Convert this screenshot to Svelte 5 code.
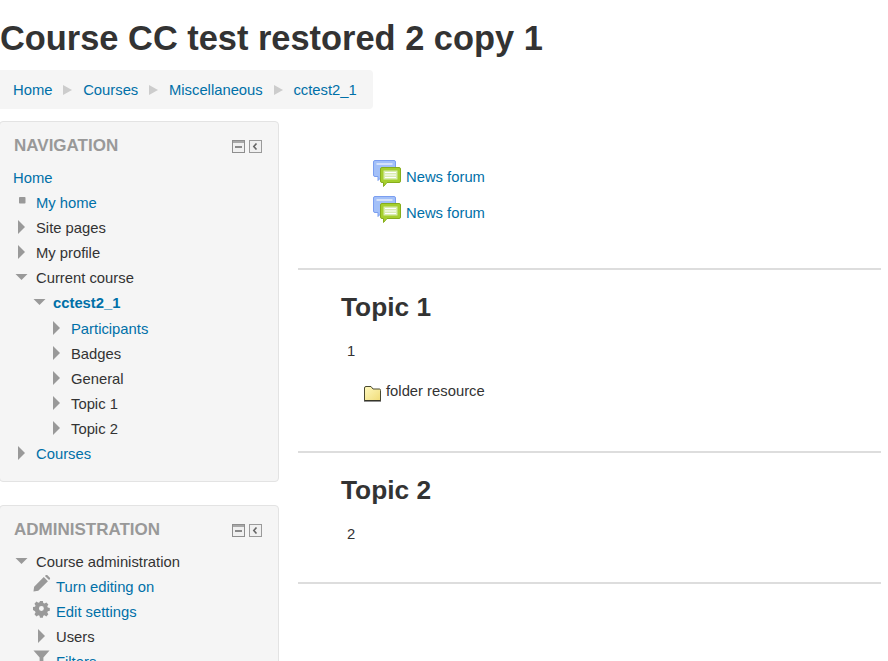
<script>
  const crumbs = ['Home', 'Courses', 'Miscellaneous', 'cctest2_1'];
  const nav = [
    { t: 'My home', link: true, icon: 'sq', lv: 'a' },
    { t: 'Site pages', icon: 'r', lv: 'a' },
    { t: 'My profile', icon: 'r', lv: 'a' },
    { t: 'Current course', icon: 'd', lv: 'a' },
    { t: 'cctest2_1', link: true, bold: true, icon: 'd', lv: 'b' },
    { t: 'Participants', link: true, icon: 'r', lv: 'c', first: true },
    { t: 'Badges', icon: 'r', lv: 'c' },
    { t: 'General', icon: 'r', lv: 'c' },
    { t: 'Topic 1', icon: 'r', lv: 'c' },
    { t: 'Topic 2', icon: 'r', lv: 'c' },
    { t: 'Courses', link: true, icon: 'r', lv: 'a' }
  ];
  const admin = [
    { t: 'Course administration', icon: 'd', lv: 'a' },
    { t: 'Turn editing on', link: true, icon: 'pencil', lv: 'e' },
    { t: 'Edit settings', link: true, icon: 'gear', lv: 'e' },
    { t: 'Users', icon: 'r', lv: 'e' },
    { t: 'Filters', link: true, icon: 'filter', lv: 'e' }
  ];
</script>

{#snippet icon(kind)}
  <span class="ic">
    {#if kind === 'r'}
      <svg class="tri" width="15" height="14" viewBox="0 0 15 14"><path d="M4 0 L11 7 L4 14Z" fill="#999"/></svg>
    {:else if kind === 'd'}
      <svg width="15" height="14" viewBox="0 0 15 14"><path d="M1.500 4 H13.500 L7.500 10Z" fill="#999"/></svg>
    {:else if kind === 'sq'}
      <svg width="15" height="14" viewBox="0 0 15 14"><rect x="5" y="2" width="6.500" height="6.500" rx="0.800" fill="#999"/></svg>
    {:else if kind === 'pencil'}
      <svg class="pencil" width="17" height="17" viewBox="0 0 18 18"><path d="M0.500 17.500 L1.200 12.400 L11.400 2.200 L15.800 6.600 L5.600 16.800Z M12.600 1 L13.800 0 Q14.400 -0.300 15 0.100 L17.900 3 Q18.300 3.600 18 4.200 L17 5.400Z" fill="#999"/></svg>
    {:else if kind === 'gear'}
      <svg class="gear" width="17" height="17" viewBox="0 0 18 18"><path fill="#999" fill-rule="evenodd" d="M7.300 0h3.400l.5 2.400 1.500.6 2.100-1.300 2.400 2.400-1.300 2.100.6 1.500 2.400.5v3.400l-2.400.5-.6 1.500 1.300 2.100-2.400 2.400-2.100-1.300-1.500.6-.5 2.400H7.300l-.5-2.400-1.500-.6-2.100 1.300-2.400-2.400 1.300-2.100-.6-1.500L-.9 10.600V7.200l2.400-.5.6-1.500L.8 3.100l2.400-2.400 2.100 1.300 1.500-.6z M9 6a2.900 2.900 0 1 0 0 5.800a2.900 2.900 0 1 0 0-5.800z" transform="translate(0.800 0) scale(0.900 0.900)"/></svg>
    {:else if kind === 'filter'}
      <svg class="filter" width="17" height="16" viewBox="0 0 18 16"><path d="M0.500 0 H17.500 L11 7.500 V16 L7 13 V7.500Z" fill="#999"/></svg>
    {/if}
  </span>
{/snippet}

{#snippet rows(list)}
  {#each list as r}
    <div class="row {r.lv}" class:first={r.first}>
      {@render icon(r.icon)}
      {#if r.link}
        <a href="#top" class:bold={r.bold}>{r.t}</a>
      {:else}
        <span>{r.t}</span>
      {/if}
    </div>
  {/each}
{/snippet}

{#snippet controls()}
  <div class="controls">
    <svg width="13" height="13" viewBox="0 0 13 13"><rect x="0.500" y="0.500" width="12" height="12" fill="#f0f0f0" stroke="#8e8e8e"/><rect x="1" y="1" width="11" height="2" fill="#a8a8a8"/><rect x="3" y="6" width="7" height="2" fill="#8a8a8a"/></svg>
    <svg width="13" height="13" viewBox="0 0 13 13"><rect x="0.500" y="0.500" width="12" height="12" fill="#f0f0f0" stroke="#9a9a9a"/><path d="M7.500 3.500 L4.800 6.500 L7.500 9.500" fill="none" stroke="#666" stroke-width="1.600"/></svg>
  </div>
{/snippet}

{#snippet forum()}
  <svg class="forum" width="28" height="28" viewBox="0 0 28 28">
    <path d="M2 0.500 H21 Q22.500 0.500 22.500 2 V15 Q22.500 16.500 21 16.500 H9 L5 20.500 V16.500 H2 Q0.500 16.500 0.500 15 V2 Q0.500 0.500 2 0.500Z" fill="#a3c0f8" stroke="#7b9ef0"/>
    <rect x="3.500" y="3" width="16" height="2" fill="#d5e2fa"/>
    <path d="M9 7.500 H26 Q27.500 7.500 27.500 9 V21 Q27.500 22.500 26 22.500 H14 L10.500 26.500 V22.500 H9 Q7.500 22.500 7.500 21 V9 Q7.500 7.500 9 7.500Z" fill="#a5cf2e" stroke="#86ad1c"/>
    <rect x="10.500" y="10.500" width="14" height="9" fill="#d9ecb0"/>
    <path d="M12 12.500 H23 M12 15 H23 M12 17.500 H23" stroke="#fff" stroke-width="1"/>
  </svg>
{/snippet}

<div class="page" id="top">
  <h1>Course CC test restored 2 copy 1</h1>
  <nav class="crumbs">
    {#each crumbs as c, i}
      {#if i > 0}
        <span class="sep"><svg width="9" height="10" viewBox="0 0 9 10"><path d="M0 0 L9 5 L0 10Z" fill="#ccc"/></svg></span>
      {/if}
      <a href="#top">{c}</a>
    {/each}
  </nav>

  <div class="cols">
    <aside>
      <section class="block nav">
        <header><h2>NAVIGATION</h2>{@render controls()}</header>
        <div class="row home"><a href="#top">Home</a></div>
        {@render rows(nav)}
      </section>
      <section class="block">
        <header><h2>ADMINISTRATION</h2>{@render controls()}</header>
        {@render rows(admin)}
      </section>
    </aside>

    <main>
      <div class="intro">
        <div class="activity">{@render forum()}<a href="#top">News forum</a></div>
        <div class="activity">{@render forum()}<a href="#top">News forum</a></div>
      </div>
      <section class="topic t1">
        <h3>Topic 1</h3>
        <p>1</p>
        <div class="res">
          <svg width="18" height="17" viewBox="0 0 18 17">
            <defs><linearGradient id="fg" x1="0" y1="0" x2="1" y2="1"><stop offset="0" stop-color="#fff9c0"/><stop offset="1" stop-color="#f0dc78"/></linearGradient></defs>
            <path d="M0.500 15.500 V3 Q0.500 1.500 2 1.500 H7 L9 4 H15.500 Q16.500 4 16.500 5.500 V15.500Z" fill="url(#fg)" stroke="#4a4a30"/>
            <path d="M0 16 H17" stroke="#222" stroke-width="1"/>
          </svg>
          <span>folder resource</span>
        </div>
      </section>
      <section class="topic t2">
        <h3>Topic 2</h3>
        <p>2</p>
      </section>
    </main>
  </div>
</div>

<style>
  :global(body) {
    margin: 0;
    background: #fff;
    overflow: hidden;
  }
  .page {
    width: 881px;
    height: 661px;
    overflow: hidden;
    font: 14.8px/20px "Liberation Sans", Arial, sans-serif;
    color: #333;
  }
  a {
    color: #0070a8;
    text-decoration: none;
  }
  h1 {
    margin: 0;
    padding-top: 18px;
    box-sizing: border-box;
    height: 70px;
    font-size: 34.4px;
    line-height: 40px;
    font-weight: bold;
    white-space: nowrap;
  }
  .crumbs {
    display: flex;
    align-items: center;
    width: 373px;
    height: 39px;
    box-sizing: border-box;
    padding-left: 13px;
    background: #f5f5f5;
    border-radius: 0 4px 4px 0;
  }
  .sep {
    display: flex;
    justify-content: center;
    width: 30.700px;
  }
  .sep svg {
    display: block;
  }
  .cols {
    display: flex;
    margin-top: 12px;
  }
  aside {
    width: 280px;
    flex-shrink: 0;
    margin-left: -1px;
  }
  .block {
    box-sizing: border-box;
    background: #f5f5f5;
    border: 1px solid #e3e3e3;
    border-radius: 4px;
    margin-bottom: 23px;
  }
  .block.nav {
    height: 361px;
  }
  header {
    display: flex;
    justify-content: space-between;
    align-items: center;
    height: 43px;
    padding: 0 16px 0 14px;
  }
  h2 {
    margin: 0;
    font-size: 17px;
    line-height: 20px;
    font-weight: bold;
    color: #999;
    position: relative;
    top: 2px;
  }
  .controls {
    display: flex;
    gap: 4px;
    position: relative;
    top: 3px;
  }
  .controls svg {
    display: block;
  }
  .row {
    display: flex;
    align-items: center;
    height: 25px;
    white-space: nowrap;
  }
  .row.home {
    padding-left: 13px;
  }
  .row.a {
    padding-left: 14px;
  }
  .row.b {
    padding-left: 32px;
  }
  .row.c {
    padding-left: 49px;
  }
  .row.c.first {
    margin-top: 1px;
  }
  .row.e {
    padding-left: 33px;
  }
  .ic {
    display: flex;
    width: 15px;
    margin-right: 7px;
    flex-shrink: 0;
    position: relative;
    top: -1px;
  }
  .row.b .ic {
    margin-right: 6px;
  }
  .row.e .ic {
    width: 18px;
    margin-right: 5px;
  }
  .row.e .tri {
    margin-left: 1px;
  }
  .ic svg {
    display: block;
    flex-shrink: 0;
    overflow: visible;
    position: relative;
  }
  .ic .pencil {
    top: -2px;
  }
  .ic .gear {
    top: -1px;
  }
  .ic .filter {
    top: -3px;
  }
  .bold {
    font-weight: bold;
  }
  main {
    flex: 1;
    margin-left: 19px;
  }
  .intro {
    box-sizing: border-box;
    height: 149px;
    padding: 39px 0 0 75px;
    border-bottom: 2px solid #ddd;
  }
  .activity {
    display: flex;
    align-items: flex-start;
    height: 36px;
  }
  .forum {
    display: block;
    margin-right: 5px;
    flex-shrink: 0;
  }
  .activity a {
    line-height: 34px;
    height: 36px;
  }
  .topic {
    box-sizing: border-box;
    padding-left: 43px;
    border-bottom: 2px solid #ddd;
  }
  .t1 {
    height: 183px;
  }
  .t2 {
    height: 131px;
  }
  h3 {
    margin: 0;
    padding-top: 17px;
    font-size: 26.3px;
    line-height: 40px;
    font-weight: bold;
  }
  p {
    margin: 0;
    padding: 14px 0 0 6px;
    line-height: 20px;
    color: #333;
  }
  .res {
    display: flex;
    align-items: flex-start;
    margin: 20px 0 0 23px;
    gap: 4px;
  }
  .res svg {
    display: block;
    margin-top: 4px;
  }
</style>
